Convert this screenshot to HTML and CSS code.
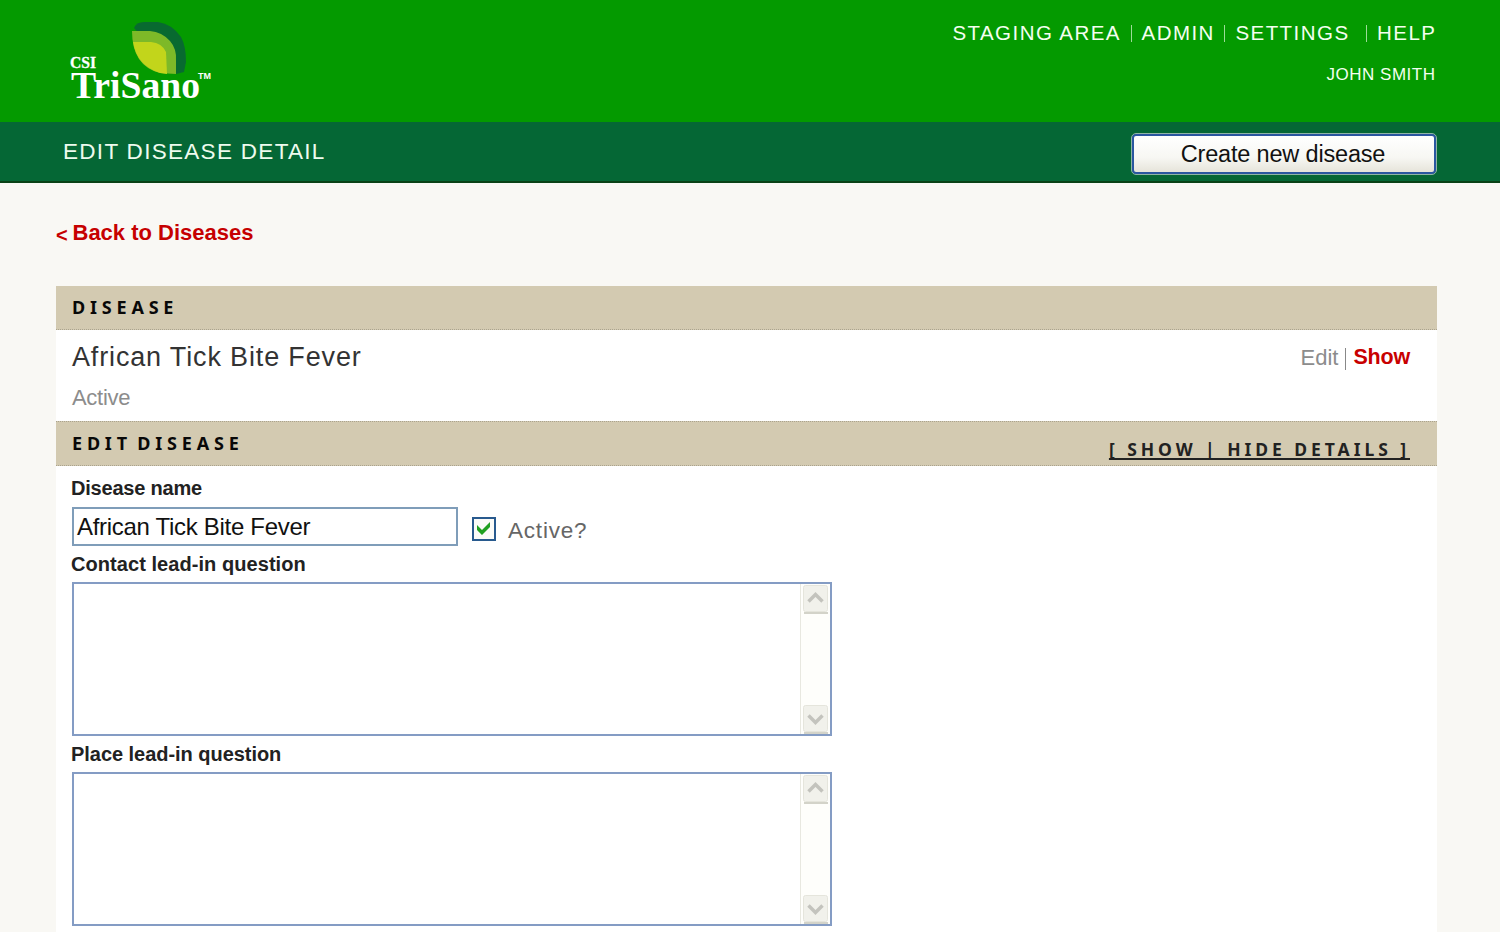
FILE: index.html
```html
<!DOCTYPE html>
<html lang="en">
<head>
<meta charset="utf-8">
<title>Edit Disease Detail</title>
<link rel="stylesheet" href="styles.css">
</head>
<body>
<header class="masthead">
  <svg class="logo" width="160" height="90" viewBox="60 15 160 90">
    <path fill="#086a30" d="M134 28 Q136 22 144 22 L158 22 Q172 24 181 37 Q186 46 186 62 L184 72 L176 74 Z"/>
    <path fill="#7db928" d="M132 31 L150 31 Q162 32 170 41 Q177 49 176 61 L176 74 L160 73 Q132 66 132 31 Z"/>
    <path fill="#c2d51b" d="M133 42 L151 42 Q162 43 166 52 L167 74 L160 73 Q137 66 133 42 Z"/>
    <text class="logo-small" x="70" y="67.500" textLength="26" lengthAdjust="spacingAndGlyphs">CSI</text>
    <text class="logo-name" x="71" y="97.500" textLength="129" lengthAdjust="spacingAndGlyphs">TriSano</text>
    <text class="logo-tm" x="198" y="79" textLength="13" lengthAdjust="spacingAndGlyphs">TM</text>
  </svg>
  <div class="account">
    <nav class="links"><a>STAGING AREA</a><i></i><a>ADMIN</a><i></i><a>SETTINGS</a><i class="wide"></i><a>HELP</a></nav>
    <div class="user">JOHN SMITH</div>
  </div>
</header>
<div class="titlebar">
  <h1>EDIT DISEASE DETAIL</h1>
  <button class="create">Create new disease</button>
</div>
<main class="content">
  <a class="back"><span class="lt">&lt;</span>Back to Diseases</a>
  <section class="panel">
    <div class="band first"><h2>DISEASE</h2></div>
    <div class="summary">
      <div>
        <div class="name">African Tick Bite Fever</div>
        <div class="status">Active</div>
      </div>
      <div class="actions"><span class="edit">Edit</span><i></i><a class="show">Show</a></div>
    </div>
    <div class="band second"><h2>EDIT DISEASE</h2><a class="toggle">[ SHOW | HIDE DETAILS ]</a></div>
    <form class="form">
      <label class="label">Disease name</label>
      <div class="row">
        <div class="input">African Tick Bite Fever</div>
        <svg class="check" width="24" height="24" viewBox="0 0 24 24"><rect x="1" y="1" width="22" height="22" fill="#fbfbf8" stroke="#285a8e" stroke-width="2"/><path fill="#20a020" d="M5 8 L10 13 L18 5 V10 L10 18 L5 13 Z"/></svg>
        <span class="active">Active?</span>
      </div>
      <label class="label contact">Contact lead-in question</label>
      <div class="area"><div class="scroll">
        <svg class="arrow" width="26" height="29" viewBox="0 0 26 29"><rect x=".5" y=".5" width="24" height="26" rx="2" fill="#f1f1eb" stroke="#e5e5dc"/><path d="M1 28H25" stroke="#c4c4b8" stroke-width="1.500"/><path d="M5.500 16.500 L12.500 9.500 L19.500 16.500" fill="none" stroke="#c3c3bd" stroke-width="3.500"/></svg>
        <svg class="arrow" width="26" height="29" viewBox="0 0 26 29"><rect x=".5" y=".5" width="24" height="26" rx="2" fill="#f1f1eb" stroke="#e5e5dc"/><path d="M1 28H25" stroke="#c4c4b8" stroke-width="1.500"/><path d="M5.500 10.500 L12.500 17.500 L19.500 10.500" fill="none" stroke="#c3c3bd" stroke-width="3.500"/></svg>
      </div></div>
      <label class="label place">Place lead-in question</label>
      <div class="area"><div class="scroll">
        <svg class="arrow" width="26" height="29" viewBox="0 0 26 29"><rect x=".5" y=".5" width="24" height="26" rx="2" fill="#f1f1eb" stroke="#e5e5dc"/><path d="M1 28H25" stroke="#c4c4b8" stroke-width="1.500"/><path d="M5.500 16.500 L12.500 9.500 L19.500 16.500" fill="none" stroke="#c3c3bd" stroke-width="3.500"/></svg>
        <svg class="arrow" width="26" height="29" viewBox="0 0 26 29"><rect x=".5" y=".5" width="24" height="26" rx="2" fill="#f1f1eb" stroke="#e5e5dc"/><path d="M1 28H25" stroke="#c4c4b8" stroke-width="1.500"/><path d="M5.500 10.500 L12.500 17.500 L19.500 10.500" fill="none" stroke="#c3c3bd" stroke-width="3.500"/></svg>
      </div></div>
    </form>
  </section>
</main>
</body>
</html>
```
FILE: styles.css
```css
* { box-sizing: border-box; }
html, body { margin: 0; height: 932px; overflow: hidden; }
body { background: #f9f8f4; font-family: "Liberation Sans", Arial, sans-serif; white-space: nowrap; color: #222; }
h1, h2 { margin: 0; font-weight: normal; }

.masthead { height: 122px; background: #049a00; display: flex; justify-content: space-between; align-items: flex-start; padding: 15px 65px 0 60px; }
.logo { display: block; }
.logo text { fill: #fff; font-family: "Liberation Serif", "Times New Roman", serif; font-weight: bold; }
.logo-small { font-size: 16px; stroke: #fff; stroke-width: .3px; }
.logo-name { font-size: 37px; }
.logo .logo-tm { font-family: "Liberation Sans", Arial, sans-serif; font-size: 9px; }
.account { color: #f4fff0; display: flex; flex-direction: column; align-items: flex-end; }
.links { display: flex; align-items: center; height: 36px; font-size: 20.5px; letter-spacing: 1.45px; }
.links a { margin-right: -1.45px; }
.links i { width: 1px; height: 17px; background: #9ddc98; margin: 1px 10px 0 11px; }
.links .wide { margin-left: 18px; }
.user { margin-top: 14px; line-height: 20px; font-size: 17px; letter-spacing: .5px; margin-right: -.5px; }

.titlebar { height: 61px; background: #056735; border-bottom: 2px solid #0a4216; display: flex; justify-content: space-between; align-items: flex-start; padding: 12px 64px 0 63px; }
.titlebar h1 { color: #eefbee; font-size: 22.5px; line-height: 36px; letter-spacing: 1.3px; }
.create { width: 304px; height: 40px; border: 2px solid #2a56a0; border-radius: 4px; outline: 1px solid #8fb5a5; background: linear-gradient(#fff, #f7f7f3 60%, #e6e4da); color: #111; font: 23.5px/34px "Liberation Sans", Arial, sans-serif; letter-spacing: -.18px; padding: 0 2px 0 0; }

.content { padding: 34px 63px 0 56px; }
.back { display: flex; align-items: baseline; height: 69px; line-height: 31px; color: #c60000; font-weight: bold; font-size: 22px; }
.lt { font-size: 20px; width: 16.5px; transform: translateY(2px); }
.panel { background: #fff; height: 660px; }
.band { background: #d3cab1; display: flex; justify-content: space-between; align-items: flex-start; padding: 0 27px 0 16px; border-bottom: 1px dotted #aaa38e; font-family: "Noto Sans", sans-serif; }
.band h2 { color: #080808; font-size: 18px; font-weight: bold; line-height: 43px; letter-spacing: 4.8px; word-spacing: -4px; }
.first { height: 44px; }
.second { height: 45px; border-top: 1px dotted #aaa38e; }
.toggle { font-size: 17.5px; font-weight: bold; line-height: 54px; letter-spacing: 3.95px; text-decoration: underline 1.5px; text-underline-offset: 2px; text-decoration-skip-ink: none; }
.summary { height: 91px; padding: 9px 27px 0 16px; display: flex; justify-content: space-between; }
.name { font-size: 27px; line-height: 36px; letter-spacing: .85px; color: #333; }
.status { font-size: 22px; line-height: 46px; letter-spacing: -.3px; color: #8c8c8c; }
.actions { display: flex; height: 37px; align-items: center; font-size: 22px; }
.edit { color: #8c8c8c; }
.actions i { width: 1px; height: 22px; background: #888; margin: 3px 7px 0; }
.show { color: #c80000; font-size: 21.5px; font-weight: bold; letter-spacing: -.2px; }

.form { padding-left: 15px; }
.label { display: block; height: 41px; line-height: 45px; font-size: 20px; font-weight: bold; letter-spacing: -.2px; }
.contact, .place { height: 36px; line-height: 37px; letter-spacing: .06px; }
.place { letter-spacing: -.04px; }
.row { display: flex; align-items: center; height: 39px; padding-left: 1px; }
.input { width: 386px; height: 39px; border: 2px solid #7f9db9; padding-left: 3px; font-size: 24px; line-height: 36px; letter-spacing: -.3px; color: #111; }
.check { margin: 5px 12px 0 14px; }
.active { font-size: 22.5px; letter-spacing: .8px; color: #666; padding-top: 9px; }
.area { width: 760px; height: 154px; margin-left: 1px; border: 2px solid #849cc4; display: flex; justify-content: flex-end; }
.scroll { width: 30px; border-left: 1px solid #e8e8e0; background: #fefefb; display: flex; flex-direction: column; justify-content: space-between; padding: 1px 0 0 2px; }
.arrow { display: block; }
```
